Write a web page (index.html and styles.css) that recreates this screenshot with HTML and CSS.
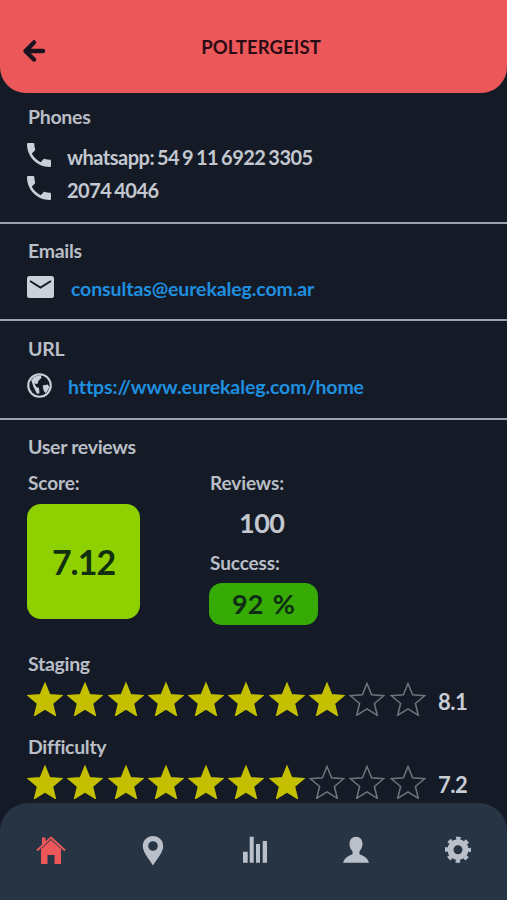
FILE: index.html
```html
<!DOCTYPE html>
<html lang="en">
<head>
  <meta charset="UTF-8" />
  <meta name="viewport" content="width=device-width, initial-scale=1.0" />
  <title>Poltergeist</title>
  <link rel="stylesheet" href="styles.css">
</head>
<body>
  <svg class="defs" width="0" height="0">
    <symbol id="star" viewBox="0 0 36 34">
      <path d="M18 1.500l4.600 11.300 12.100.9-9.300 7.800 2.900 11.800L18 26.900 7.700 33.300l2.900-11.800-9.300-7.800 12.100-.9z" />
    </symbol>
    <symbol id="phone" viewBox="3 3 18 18">
      <path d="M6.600 10.800c1.400 2.800 3.800 5.100 6.600 6.600l2.200-2.200c.3-.3.7-.4 1-.2 1.100.4 2.300.6 3.600.6.600 0 1 .4 1 1V20c0 .6-.4 1-1 1C10.600 21 3 13.400 3 4c0-.6.400-1 1-1h3.500c.6 0 1 .4 1 1 0 1.300.2 2.500.6 3.600.1.300 0 .7-.2 1z" />
    </symbol>
  </svg>

  <div class="page">
    <header class="topbar">
      <svg class="back" viewBox="0 0 24 24"><path d="M12 3.500L3.500 12l8.500 8.500M4.500 12H21" /></svg>
      <h1>POLTERGEIST</h1>
    </header>

    <main class="content">
      <section class="block block-phones">
        <div class="label">Phones</div>
        <div class="row">
          <svg class="icon icon-phone"><use href="#phone" /></svg>
          <span>whatsapp: 54 9 11 6922 3305</span>
        </div>
        <div class="row">
          <svg class="icon icon-phone"><use href="#phone" /></svg>
          <span>2074 4046</span>
        </div>
      </section>

      <section class="block block-mail">
        <div class="label">Emails</div>
        <div class="row">
          <svg class="icon icon-mail" viewBox="0 0 27 22">
            <rect width="27" height="22" rx="2.500" fill="#ccd0d8" />
            <path d="M3 5l10.500 6.500L24 5" fill="none" stroke="#151b26" stroke-width="2" />
          </svg>
          <a class="link" href="#">consultas@eurekaleg.com.ar</a>
        </div>
      </section>

      <section class="block block-url">
        <div class="label">URL</div>
        <div class="row">
          <svg class="icon icon-globe" viewBox="0 0 24 24">
            <circle cx="12" cy="12" r="10.800" fill="none" stroke="#ccd0d8" stroke-width="2" />
            <path d="M4 7l3-3.500 6-1.500 1 2.500-3 3-1 3-3-.5 2 3.500 2.500 1 .5 5-2.500.5-3-6zM15 12l5-1 1.500 3-3.500 5.500-2-2.500z" fill="#ccd0d8" />
          </svg>
          <a class="link" href="#">https://www.eurekaleg.com/home</a>
        </div>
      </section>

      <section class="reviews">
        <div class="label">User reviews</div>
        <div class="summary">
          <div class="score-col">
            <div class="label label-sm">Score:</div>
            <div class="score">7.12</div>
          </div>
          <div class="stats-col">
            <div class="label label-sm">Reviews:</div>
            <div class="count">100</div>
            <div class="label label-sm">Success:</div>
            <div class="success">92 %</div>
          </div>
        </div>

        <div class="label label-rating">Staging</div>
        <div class="stars">
          <svg class="star on"><use href="#star" /></svg>
          <svg class="star on"><use href="#star" /></svg>
          <svg class="star on"><use href="#star" /></svg>
          <svg class="star on"><use href="#star" /></svg>
          <svg class="star on"><use href="#star" /></svg>
          <svg class="star on"><use href="#star" /></svg>
          <svg class="star on"><use href="#star" /></svg>
          <svg class="star on"><use href="#star" /></svg>
          <svg class="star"><use href="#star" /></svg>
          <svg class="star"><use href="#star" /></svg>
          <span class="rating">8.1</span>
        </div>

        <div class="label label-rating">Difficulty</div>
        <div class="stars">
          <svg class="star on"><use href="#star" /></svg>
          <svg class="star on"><use href="#star" /></svg>
          <svg class="star on"><use href="#star" /></svg>
          <svg class="star on"><use href="#star" /></svg>
          <svg class="star on"><use href="#star" /></svg>
          <svg class="star on"><use href="#star" /></svg>
          <svg class="star on"><use href="#star" /></svg>
          <svg class="star"><use href="#star" /></svg>
          <svg class="star"><use href="#star" /></svg>
          <svg class="star"><use href="#star" /></svg>
          <span class="rating">7.2</span>
        </div>
      </section>
    </main>

    <nav class="tabs">
      <svg class="tab tab-active" viewBox="0 0 30 30">
        <path d="M5 14L15 5l10 9v15h-6.500v-9h-7v9H5zM6 2.500h3.500v5L6 10.500z" />
        <path d="M1 15.500L15 2.500l14 13" fill="none" stroke="#ec585a" stroke-width="2" />
      </svg>
      <svg class="tab" viewBox="0 0 30 30">
        <path fill-rule="evenodd" d="M15 1C9.300 1 4.800 5.400 4.800 11c0 6.500 6.700 13.500 10.200 19.500C18.500 24.500 25.200 17.500 25.200 11 25.200 5.400 20.700 1 15 1zm0 5.200a4.800 4.800 0 110 9.600 4.800 4.800 0 010-9.600z" />
      </svg>
      <svg class="tab" viewBox="0 0 30 30">
        <path d="M3 16.700h4.700v11H3zM9.700 1.700h4v26h-4zM16 9h4v18.700h-4zM22.700 6H27v21.700h-4.300z" />
      </svg>
      <svg class="tab" viewBox="0 0 30 30">
        <path d="M15 1.700c4 0 6.500 3 6.500 7 0 3-1.200 5.800-3 7.600v2.900c3 1.500 7.500 2.400 9.500 8.500H2c2-6.100 6.500-7 9.500-8.500v-2.900c-1.800-1.800-3-4.600-3-7.600 0-4 2.500-7 6.500-7z" />
      </svg>
      <svg class="tab tab-gear" viewBox="0 0 30 30">
        <circle cx="15" cy="14.700" r="7.500" stroke-width="6" />
        <circle cx="15" cy="14.700" r="11.500" stroke-width="3" stroke-dasharray="4.500 4.530" stroke-dashoffset="2.250" />
      </svg>
    </nav>
  </div>
</body>
</html>
```

FILE: styles.css
```css
body {
  margin: 0;
  background-color: #151b26;
  font-family: "Lato", "Open Sans", sans-serif;
  color: #ccd0d8;
}
.defs {
  position: absolute;
}
.page {
  display: flex;
  flex-direction: column;
  height: 900px;
  overflow: hidden;
}
.topbar {
  display: flex;
  align-items: center;
  height: 93px;
  padding: 6px 22px 0;
  box-sizing: border-box;
  background-color: #ec585a;
  border-radius: 0 0 26px 26px;
}
.topbar h1 {
  flex: 1;
  margin: 0 9px 5px 0;
  text-align: center;
  font-size: 18.500px;
  font-weight: 700;
  letter-spacing: .1px;
  color: #2a0d14;
}
.back {
  width: 24px;
  height: 24px;
  margin-bottom: -3px;
  fill: none;
  stroke: #1c1220;
  stroke-width: 4.500;
  stroke-linecap: round;
  stroke-linejoin: round;
}
.content {
  flex: 1;
}
.block {
  padding: 0 28px 16px;
  border-bottom: 2px solid #9aa2ad;
  margin-bottom: 15px;
}
.block-phones {
  padding-top: 12px;
}
.block-phones .label {
  margin-bottom: 11px;
}
.block-mail {
  padding-bottom: 14px;
  margin-bottom: 16px;
}
.block-url {
  padding-bottom: 15px;
  margin-bottom: 15px;
}
.label {
  font-size: 19.500px;
  line-height: 24px;
  font-weight: 700;
  letter-spacing: -.3px;
  color: #b9bec7;
}
.label-sm {
  font-size: 19px;
  letter-spacing: -.1px;
}
.row {
  display: flex;
  align-items: center;
  height: 33px;
  margin-top: 9px;
  font-size: 20px;
  font-weight: 700;
  letter-spacing: -.5px;
  word-spacing: -1.500px;
  color: #c3c8d0;
}
.row + .row {
  margin-top: 0;
}
.icon {
  flex: none;
  margin-bottom: 3px;
  fill: #ccd0d8;
}
.icon-phone {
  width: 24px;
  height: 24px;
  margin-left: -1px;
  margin-right: 16px;
}
.icon-mail {
  width: 27px;
  height: 22px;
  margin-left: -1px;
  margin-right: 17px;
}
.icon-globe {
  width: 25px;
  height: 25px;
  margin-left: -1px;
  margin-right: 16px;
}
.link {
  color: #1f8fe0;
  font-size: 19.500px;
  letter-spacing: -.1px;
  text-decoration: none;
}
.reviews {
  padding: 0 28px;
}
.summary {
  display: flex;
  margin-top: 12px;
}
.score-col {
  width: 182px;
}
.score {
  display: flex;
  align-items: center;
  justify-content: center;
  width: 113px;
  height: 115px;
  margin-top: 9px;
  margin-left: -1px;
  background-color: #8fd100;
  border-radius: 14px;
  font-size: 34px;
  font-weight: 700;
  letter-spacing: -1px;
  color: #12300f;
}
.count {
  padding-left: 29px;
  margin: 12px 0;
  font-size: 27px;
  font-weight: 700;
  line-height: 32px;
  letter-spacing: -.5px;
  color: #c3c8d0;
}
.success {
  width: 109px;
  height: 42px;
  line-height: 42px;
  margin-top: 8px;
  margin-left: -1px;
  text-align: center;
  background-color: #36aa05;
  border-radius: 13px;
  font-size: 27px;
  font-weight: 700;
  letter-spacing: .3px;
  word-spacing: 2px;
  color: #0f2e14;
}
.label-rating {
  margin-top: 27px;
}
.label-rating ~ .label-rating {
  margin-top: 19px;
}
.stars {
  display: flex;
  align-items: center;
  gap: 4.300px;
  margin: 6px 0 0 -1px;
}
.star {
  width: 36px;
  height: 34px;
  fill: none;
  stroke: #6f7580;
  stroke-width: 1.500;
}
.star.on {
  fill: #c4c000;
  stroke: #c4c000;
}
.rating {
  margin-left: 8px;
  padding-top: 4px;
  font-size: 22px;
  font-weight: 700;
  letter-spacing: -.5px;
  color: #c8ccd4;
}
.tabs {
  display: flex;
  justify-content: space-between;
  align-items: center;
  height: 97px;
  padding: 0 34px 3px 36px;
  box-sizing: border-box;
  background-color: #273444;
  border-radius: 28px 28px 0 0;
}
.tab {
  width: 30px;
  height: 30px;
  fill: #b9c0ca;
  overflow: visible;
}
.tab-active {
  fill: #ec585a;
}
.tab-gear circle {
  fill: none;
  stroke: #b9c0ca;
}
```
